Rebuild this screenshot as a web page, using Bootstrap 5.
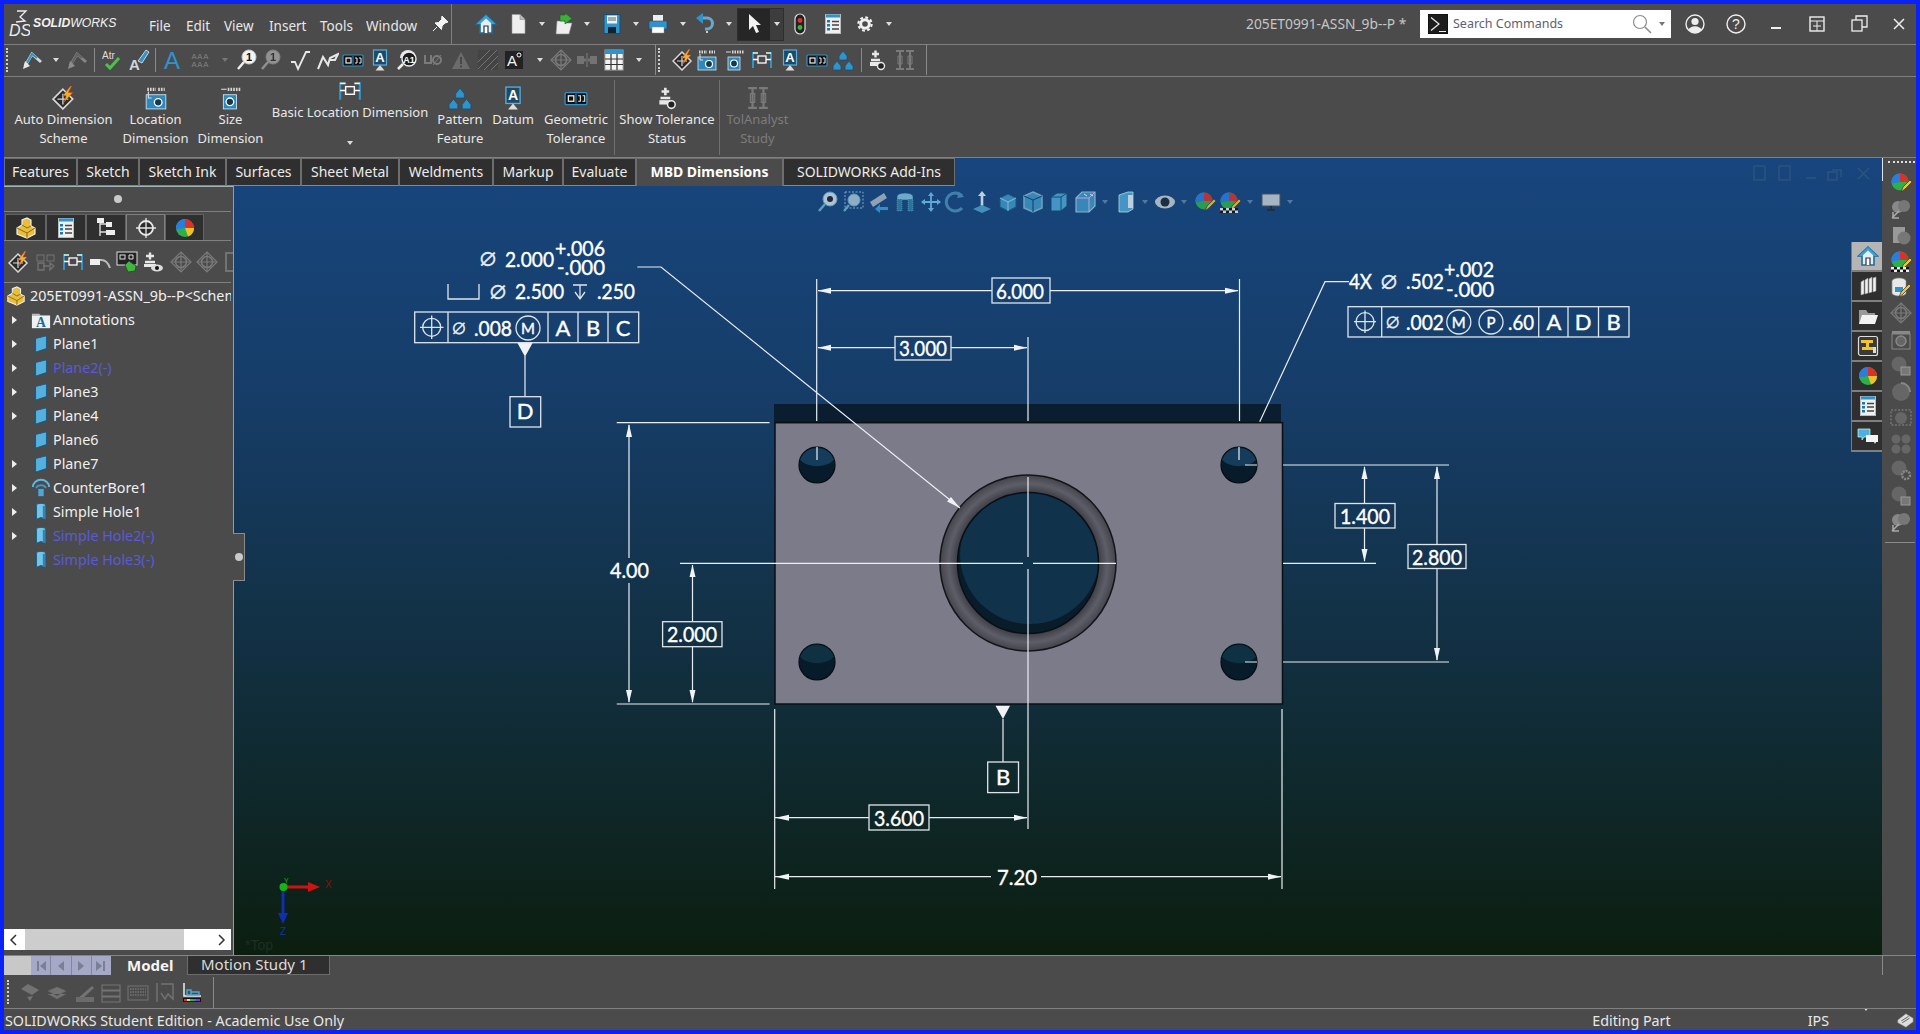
<!DOCTYPE html>
<html lang="en">
<head>
<meta charset="utf-8">
<title>SOLIDWORKS</title>
<link href="https://cdn.jsdelivr.net/npm/bootstrap@5.3.0/dist/css/bootstrap.min.css" rel="stylesheet">
<style>
html,body{height:100%;margin:0;overflow:hidden}
body{background:#0a22f5;font-family:"Noto Sans","Open Sans",sans-serif;color:#e8e8e8;font-size:13px}
.app{height:1034px;border:4px solid #0a22f5;background:#4b4b4b}
.ic{width:22px;height:22px;display:block;flex:none}
.dis{opacity:.42;filter:grayscale(1)}
.c{width:22px;height:22px;display:flex;align-items:center;justify-content:center}
.car::before{content:"";border:3.5px solid transparent;border-top:4px solid #dcdcdc;border-bottom:0}
.car.off::before{border-top-color:#777}
.vs{width:1px;height:24px;background:#8a8a8a;display:block}
.grip{width:2px;height:24px;border-left:2px dotted #d0d0d0;display:block}
/* menu row */
.row1{height:41px;border-bottom:1px solid #808080;flex:none}
.logo{width:145px;flex:none;padding-left:4px;gap:3px}
.ds{width:22px;height:30px}
.brand{font-family:"Liberation Sans",sans-serif;font-style:italic;font-size:12.2px;color:#f2f2f2;white-space:nowrap;margin-top:-1px}
.menu{display:grid;grid-template-columns:37px 38px 45px 51px 46px 67px;width:284px;flex:none;font-size:13.5px;margin-top:4px}
.pin-g{margin-left:-4px}
.tbsep{width:1px;height:40px;background:#808080;flex:none}
.qa{display:grid;grid-template-columns:32px 24px 23px 22px 25px 24px 22px 25px 22px 24px 24px 23px 24px 33px 32px 24px 22px;margin-left:23px;flex:none;align-items:center}
.selbtn{grid-column:span 2;display:flex;width:47px;height:33px;margin-left:-5px;border:1px solid #2e2e2e}
.selbtn b{width:32px;background:#262626;display:flex;align-items:center;justify-content:center}
.selbtn i{flex:1;background:#3d3d3d;display:flex;align-items:center;justify-content:center}
.title{color:#c6c6c6;font-size:13.8px;white-space:nowrap;width:160px;margin-right:14px}
.search{width:251px;height:28px;background:#fff;color:#5e6070;font-size:12.5px;gap:4px;padding-left:7px}
.search .mg{margin-left:auto;margin-right:-4px}
.search .car{width:18px}
.search .car::before{border-top-color:#777}
.ctl{display:grid;grid-template-columns:41px 40px 41px 42px 40px 22px;margin-left:13px;margin-right:6px}
/* toolbar 2 */
.row2{height:32px;border-bottom:1px solid #808080;flex:none;align-items:center;display:flex}
.tb2{display:grid;margin-left:-8px;margin-bottom:2px;align-items:center;grid-template-columns:26px 23px 22px 16px 18px 27px 16px 17px 28px 25px 22px 24px 28px 29px 25px 27px 28px 25px 28px 27px 26px 26px 21px 26px 27px 25px 16px 4px 24px 24px 28px 27px 28px 27px 26px 18px 16px 28px 21px 22px}
.full{height:31px;background:#8a8a8a}
/* ribbon */
.ribbon{height:81px;border-bottom:1px solid #808080;flex:none;display:grid;grid-template-columns:119px 65px 85px 154px 66px 40px 81px 1px 104px 1px 75px}
.rb{display:flex;flex-direction:column;align-items:center;padding-top:9px;line-height:19px;font-size:13px;text-align:center;white-space:nowrap}
.rb .ic{width:24px;height:24px}
.rb.up{padding-top:2px}
.rb.up .car{height:10px;margin-top:23px}
.rb.geo{padding-left:5px}
.rb.off{color:#7c7c7c}
.rsep{background:#6f6f6f;margin:3px 0 0;height:75px}
/* stage */
.stage{min-height:0;background:linear-gradient(#17457d 0%,#163d68 30%,#112d3a 68%,#0b1e0f 100%)}
.canvas{position:absolute;left:0;top:0;width:1878px;height:797px}
.txt{font-family:Lato,"Liberation Sans",sans-serif;fill:#fff;font-size:22px;stroke:#fff;stroke-width:.4}
.sm{font-family:"DejaVu Sans",sans-serif;font-size:28px;fill:#dfe6ec}
.ln{stroke:#e9eef2;stroke-width:1.2;fill:none}
.ar{fill:#f0f3f5}
.bx{fill:none;stroke:#dfe6ea;stroke-width:1.3}
.hud{opacity:.82}
.cmd{display:grid;grid-template-columns:73px 62px 87px 75px 98px 94px 70px 73px 147px 172px;position:relative;height:28px;width:950px;flex:none}
.cmd .nav-link{height:28px;padding:0;color:#ececec;font-size:14px;line-height:25px;text-align:center;background:#2f2f2f;border:1px solid #6e6e6e;border-bottom-color:#888;white-space:nowrap}
.cmd .nav-link.active{background:#4b4b4b;font-weight:700;color:#fff;border-bottom:0}
.under{min-height:0}
.fm{width:230px;background:#4b4b4b;border-right:1px solid #8aa0b0;border-top:1px solid #9fb2b2;position:relative;padding-right:2px}
.fm-top{height:25px;border-bottom:1px solid #7f7f7f}
.dot{width:8px;height:8px;border-radius:50%;background:#c9c9c9;display:block}
.fm-tabs{display:grid;grid-template-columns:41px 40px 40px 39px 39px;height:27px;margin-top:2px;border-bottom:1px solid #808080;padding-left:1px}
.fm-tabs span{background:#2f2f2f;height:26px;display:flex;align-items:center;justify-content:center;border:1px solid #636363;border-bottom:0}
.fm-tabs span.on{background:#4b4b4b;border-color:#808080}
.fm-icons{display:grid;grid-template-columns:27px 27px 27px 27px 26px 28px 26px 21px 22px;margin-left:4px;height:41px;align-items:center;width:225px;overflow:hidden}
.fm-rule{border-bottom:1px solid #808080;height:1px}
.tree .list-group-item{background:transparent;border:0;border-radius:0;padding:0 0 0 8px;height:24px;color:#f0f0f0;font-size:14.3px;display:flex;align-items:center;white-space:nowrap;line-height:24px}
.tree .arrow{width:6px;height:10px;flex:none;margin-right:13px}
.tree .arrow.r::before{content:"";display:block;border:4px solid transparent;border-left:5px solid #eee;border-right:0;margin-top:1px}
.tree .list-group-item .ic{width:20px;height:20px;margin-right:2px}
.tree .off{color:#5a5ad8!important}
.tree .root{padding-left:2px;overflow:hidden;margin-top:1px}
.tree .root .ic{margin-right:4px}
.hs{height:21px;background:#fff;margin-bottom:5px;flex:none;color:#222}
.hs b{width:159px;height:21px;background:#cdcdcd;margin:0 32px 0 6px}
.hs svg{width:10px;height:12px;margin-left:5px}
.hs svg.ms-0{margin-left:0}
.notch{position:absolute;left:229px;top:346px;width:12px;height:48px;background:#4b4b4b;border:1px solid #8a8a8a;border-left:0;display:flex;align-items:center;justify-content:flex-end;padding-right:1px}
.pane{width:34px;background:#4b4b4b;position:relative;flex:none}
.pane::before{content:"";position:absolute;left:0;top:0;width:1px;height:23px;background:#dfe6ea}
.pane .gr{height:12px;padding:3px 1px 0 6px}
.pane .gr i{display:block;border-top:2px dotted #ddd}
.pane .c{margin-left:8px;height:26.08px}
.pane hr{margin:7px 1px 0 3px;opacity:1;border-color:#8a8a8a}
.tasks{position:absolute;right:-1px;top:84px;width:32px}
.tasks span{display:flex;height:30px;align-items:center;justify-content:center;background:#2f2f2f;border:1px solid #7a7a7a;border-right:0;border-top:0;border-bottom:2px solid #7f7f7f}
.tasks span.on{background:#b5b5b5}
/* bottom */
.row3{height:21px;flex:none;border-top:1px solid #858585}
.nav-g{width:27px;background:#c8c8c8;height:19px}
.navb{width:80px;height:19px;display:grid;grid-template-columns:repeat(4,1fr);gap:1px;background:#84869c}
.navb span{background:#a5a8c6;display:flex;align-items:center;justify-content:center}
.navb svg{width:12px;height:12px}
.model{font-weight:700;color:#f5f5f5;font-size:15px;margin-left:16px;width:60px;line-height:18px}
.motion{width:143px;height:19px;background:#2f2f2f;border:1px solid #6c6c6c;border-top:0;padding-left:13px;font-size:15px;line-height:17px;color:#dcdcdc;white-space:nowrap}
.row3 .rl{margin-left:auto;width:34px;border-left:1px solid #8a8a8a;height:19px}
.row4{height:33px;flex:none;border-bottom:1px solid #808080;align-items:center}
.mot{display:grid;grid-template-columns:22px 27px 28px 26px 27px 27px 27px 21px 22px;margin-left:-7px;align-items:center}
.stat{height:21px;font-size:14.3px;line-height:24px;overflow:hidden;flex:none;white-space:nowrap;padding-left:1px}
.stat .e{margin-right:137px}
.stat .i{margin-right:34px}
.stat .u{margin-right:24px;width:8px}
.stat .ic{width:20px;height:20px;margin:1px 1px 0 0}
</style>
</head>
<body>
<svg class="d-none" xmlns="http://www.w3.org/2000/svg">
<symbol id="home" viewBox="0 0 22 22"><path d="M11 2 1.500 11H5v9h12v-9h3.500z" fill="#e6eef2" stroke="#1b6f9c" stroke-width="1.600"/><path d="M11 2 1.500 11 5 11 11 5.500 17 11h3.500z" fill="#3aa0d4"/><path d="M9 20v-7h4v7" fill="#fff" stroke="#234" stroke-width="1.200"/></symbol>
<symbol id="doc" viewBox="0 0 22 22"><path d="M5 1.500h8l5 5V20.500H5z" fill="#efefef" stroke="#999" stroke-width=".6"/><path d="M13 1.500v5h5" fill="#bbb" stroke="#888" stroke-width=".6"/></symbol>
<symbol id="open" viewBox="0 0 22 22"><path d="M3 8h7l2 2h6l-3 11H2z" fill="#eee" stroke="#888" stroke-width=".6"/><path d="M6 2h5V0l7 5.500L11 11V8H6z" fill="#3ab03c" stroke="#1b5a1b" stroke-width=".6"/></symbol>
<symbol id="save" viewBox="0 0 22 22"><rect x="3" y="1.500" width="16" height="19" fill="#2f93cc" stroke="#174e70"/><rect x="6" y="2.500" width="10" height="8" fill="#ecf2f5"/><path d="M7 5h8M7 7h8" stroke="#567"/><rect x="7" y="14" width="8" height="6" fill="#123"/></symbol>
<symbol id="print" viewBox="0 0 22 22"><rect x="6" y="2" width="10" height="7" fill="#eee"/><rect x="2" y="8" width="18" height="8" rx="1" fill="#2f93cc" stroke="#174e70" stroke-width=".6"/><rect x="5" y="14" width="12" height="6" fill="#fff" stroke="#888" stroke-width=".5"/></symbol>
<symbol id="undo" viewBox="0 0 22 22"><path d="M7 5h6a5.500 5.500 0 0 1 0 11H11" fill="none" stroke="#6ea6c8" stroke-width="3"/><path d="M9 0 2 5l7 6z" fill="#2f93cc"/><path d="M12 19h2" stroke="#ccc" stroke-width="2"/></symbol>
<symbol id="cur" viewBox="0 0 22 22"><path d="M6 1v16l4-4 3 7 3-1-3-7h5z" fill="#f2f2f2"/></symbol>
<symbol id="traf" viewBox="0 0 22 22"><rect x="6" y="1" width="10" height="20" rx="5" fill="#222" stroke="#ddd" stroke-width="1.200"/><circle cx="11" cy="7.500" r="2.400" fill="#d33"/><circle cx="11" cy="14.500" r="2.400" fill="#3b3"/></symbol>
<symbol id="list" viewBox="0 0 22 22"><rect x="3.500" y="1.500" width="15" height="19" fill="#f0f0f0" stroke="#bbb"/><path d="M4 1.500h14v3H4z" fill="#2f93cc"/><path d="M5 7h3v2.500H5zM5 11h3v2.500H5zM5 15h3v2.500H5z" fill="#1e78ad"/><path d="M10 8.500h7M10 12h7M10 16h7" stroke="#444" stroke-width="1.400"/></symbol>
<symbol id="gear" viewBox="0 0 22 22"><circle cx="11" cy="11" r="4.300" fill="none" stroke="#f0f0f0" stroke-width="3"/><circle cx="11" cy="11" r="6.600" fill="none" stroke="#f0f0f0" stroke-width="2.200" stroke-dasharray="2.800 2.400"/></symbol>
<symbol id="pin" viewBox="0 0 22 22"><path d="M13 3 19 9l-3 1-3 3-.5 3.500L6 10l3.500-.5 3-3zM8 14l-4 4" fill="#f4f4f4" stroke="#f4f4f4" stroke-width="1"/></symbol>
<symbol id="term" viewBox="0 0 22 22"><rect x="1.500" y="1.500" width="19" height="19" fill="#1d1d1d" stroke="#111"/><path d="m4 4.500 8 6.500-8 6.500M12 18.500h7" fill="none" stroke="#f0f0f0" stroke-width="1.200"/></symbol>
<symbol id="mag" viewBox="0 0 22 22"><circle cx="9" cy="9" r="6.500" fill="none" stroke="#8c8c8c" stroke-width="1.200"/><path d="m14 14 6 6" stroke="#8c8c8c" stroke-width="1.600"/></symbol>
<symbol id="user" viewBox="0 0 22 22"><circle cx="11" cy="11" r="9" fill="none" stroke="#eee" stroke-width="1.400"/><circle cx="11" cy="8.500" r="3.600" fill="#eee"/><path d="M4.500 17a7 6 0 0 1 13 0 9 9 0 0 1-13 0z" fill="#eee"/></symbol>
<symbol id="help" viewBox="0 0 22 22"><circle cx="11" cy="11" r="9" fill="none" stroke="#eee" stroke-width="1.400"/><text x="11" y="16" text-anchor="middle" font-family="Liberation Sans,sans-serif" font-size="14" fill="#eee">?</text></symbol>
<symbol id="min" viewBox="0 0 22 22"><path d="M6 15h10" stroke="#eee" stroke-width="2"/></symbol>
<symbol id="tile" viewBox="0 0 22 22"><rect x="4" y="4" width="14" height="14" fill="none" stroke="#eee" stroke-width="1.400"/><path d="M4 8h14M11 8v10" stroke="#eee" stroke-width="1"/><path d="M7 13h8" stroke="#eee"/></symbol>
<symbol id="rest" viewBox="0 0 22 22"><path d="M8 7V3h11v11h-5" fill="none" stroke="#eee" stroke-width="1.300"/><rect x="4" y="7" width="10" height="11" fill="none" stroke="#eee" stroke-width="1.300"/></symbol>
<symbol id="close" viewBox="0 0 22 22"><path d="m6 6 10 10M16 6 6 16" stroke="#eee" stroke-width="1.500"/></symbol>
<symbol id="smart" viewBox="0 0 22 22"><path d="M3 17 10 5l9 8" fill="none" stroke="#d6d6d6" stroke-width="3"/><path d="M5 14 10 5l5 4" fill="none" stroke="#2f93cc" stroke-width="2"/><path d="M1 20 3 12l5 5z" fill="#e8e8e8"/></symbol>
<symbol id="spell" viewBox="0 0 22 22"><text x="1" y="10" font-family="Liberation Sans,sans-serif" font-size="10" fill="#ddd">Atr</text><path d="m5 15 4 4 9-10" fill="none" stroke="#4cc24a" stroke-width="3"/></symbol>
<symbol id="brush" viewBox="0 0 22 22"><text x="1" y="21" font-family="Liberation Sans,sans-serif" font-size="15" font-weight="700" fill="#cfd6da">A</text><path d="m10 12 8-11 3 2-7 11z" fill="#2f93cc" stroke="#eee" stroke-width=".8"/></symbol>
<symbol id="bigA" viewBox="0 0 22 22"><text x="11" y="20" text-anchor="middle" font-family="Liberation Sans,sans-serif" font-size="24" fill="#2f93cc">A</text></symbol>
<symbol id="aaa" viewBox="0 0 22 22"><text x="11" y="10" text-anchor="middle" font-family="Liberation Sans,sans-serif" font-size="8" font-weight="700" fill="#aaa">AAA</text><text x="11" y="18" text-anchor="middle" font-family="Liberation Sans,sans-serif" font-size="8" font-weight="700" fill="#aaa">AAA</text></symbol>
<symbol id="find" viewBox="0 0 22 22"><circle cx="13" cy="8" r="7" fill="#f4f4f4" stroke="#ccc"/><text x="13" y="12" text-anchor="middle" font-family="Liberation Sans,sans-serif" font-size="11" font-weight="700" fill="#111">1</text><path d="m8 13-6 7" stroke="#eee" stroke-width="2.500"/></symbol>
<symbol id="sfin" viewBox="0 0 22 22"><path d="M3 13h4l3 7 8-17h4" fill="none" stroke="#e8e8e8" stroke-width="1.800"/></symbol>
<symbol id="weld" viewBox="0 0 22 22"><path d="M1 20 6 8l5 8 2-7 8-4-3 6-6 0" fill="none" stroke="#e8e8e8" stroke-width="2"/></symbol>
<symbol id="gtol" viewBox="0 0 22 22"><rect x="1" y="6" width="20" height="11" rx="1" fill="#111" stroke="#2f93cc" stroke-width="1.200"/><rect x="4" y="9" width="5" height="5" fill="none" stroke="#eee" stroke-width="1.200"/><path d="M11 7v9" stroke="#2f93cc"/><path d="M13 9h2v5h-2M17 9h2v5h-2" fill="none" stroke="#eee"/></symbol>
<symbol id="datum" viewBox="0 0 22 22"><rect x="4.500" y="1" width="13" height="15" fill="#1e4a68" stroke="#52b0e0" stroke-width="1.200"/><text x="11" y="13" text-anchor="middle" font-family="Liberation Sans,sans-serif" font-size="13" font-weight="700" fill="#fff">A</text><path d="m11 16-4.500 5.500h9z" fill="#ddd"/></symbol>
<symbol id="dfind" viewBox="0 0 22 22"><path d="M3 9a8 8 0 0 1 16 0z" fill="#e8e8e8"/><circle cx="12" cy="10" r="7" fill="#1c1c1c" stroke="#eee" stroke-width="1.400"/><text x="12" y="14" text-anchor="middle" font-family="Liberation Sans,sans-serif" font-size="9" font-weight="700" fill="#fff">A1</text><path d="m6 15-5 5" stroke="#eee" stroke-width="2.500"/></symbol>
<symbol id="ud" viewBox="0 0 22 22"><path d="M3 6v8h6V6" fill="none" stroke="#bbb" stroke-width="2"/><circle cx="15" cy="11" r="4" fill="none" stroke="#bbb" stroke-width="2"/><path d="m11 16 8-10" stroke="#bbb"/></symbol>
<symbol id="tri" viewBox="0 0 22 22"><path d="M11 3 20 20H2z" fill="#999"/><path d="M11 8v7M11 16.500v2" stroke="#444" stroke-width="2"/></symbol>
<symbol id="hatch" viewBox="0 0 22 22"><rect x="1" y="1" width="20" height="20" fill="#3c3c3c"/><path d="M1 13 13 1M1 20 20 1M7 21 21 7M14 21l7-7" stroke="#aaa"/></symbol>
<symbol id="note" viewBox="0 0 22 22"><rect x="2" y="2" width="18" height="18" fill="#222"/><text x="9" y="17" text-anchor="middle" font-family="Liberation Sans,sans-serif" font-size="15" fill="#f4f4f4">A</text><circle cx="16" cy="6" r="2" fill="none" stroke="#f4f4f4"/></symbol>
<symbol id="tgt" viewBox="0 0 22 22"><path d="M11 1 21 11 11 21 1 11z" fill="none" stroke="#bbb" stroke-width="1.200"/><circle cx="11" cy="11" r="5.500" fill="none" stroke="#bbb" stroke-width="1.600"/><path d="M11 2v18M2 11h18" stroke="#bbb" stroke-width="1.200"/></symbol>
<symbol id="cl" viewBox="0 0 22 22"><path d="M1 7h7v8H1zM14 7h7v8h-7z" fill="#aaa"/><path d="M8 11h6" stroke="#aaa" stroke-width="3"/><path d="M11 4v14" stroke="#888" stroke-width="2"/></symbol>
<symbol id="table" viewBox="0 0 22 22"><rect x="2" y="1" width="18" height="20" fill="#f2f2f2" stroke="#aaa"/><path d="M2 1h18v4H2z" fill="#2f93cc"/><path d="M2 10h18M2 15.500h18M8 5v16M14 5v16" stroke="#333" stroke-width="1.200"/></symbol>
<symbol id="auto" viewBox="0 0 22 22"><path d="M10 3 19 12 10 21 1 12z" fill="#2b2b2b" stroke="#d8d8d8" stroke-width="1.500"/><path d="M5 12h10M10 7v10" stroke="#d8d8d8" stroke-width="1.200"/><path d="M17 0 10 9h3l-2 6 8-9h-4l3-6z" fill="#f2b120" stroke="#c5412a" stroke-width=".5"/></symbol>
<symbol id="loc" viewBox="0 0 22 22"><path d="M3 3h8M13 3h6" stroke="#d8d8d8" stroke-width="3" stroke-dasharray="1.500 1"/><rect x="2" y="8" width="18" height="13" fill="#2f88bd" stroke="#cfe5f0" stroke-width=".8"/><circle cx="13" cy="15" r="3.500" fill="#103a55" stroke="#fff" stroke-width="1.200"/><path d="M4 5v6h3" fill="none" stroke="#ddd"/></symbol>
<symbol id="size" viewBox="0 0 22 22"><path d="M8 3h12" stroke="#d8d8d8" stroke-width="3" stroke-dasharray="1.500 1"/><path d="M2 3h5" stroke="#d8d8d8"/><rect x="4" y="8" width="12" height="13" fill="#2f88bd" stroke="#cfe5f0" stroke-width=".8"/><circle cx="10" cy="14.500" r="3.500" fill="#103a55" stroke="#fff" stroke-width="1.200"/></symbol>
<symbol id="basic" viewBox="0 0 22 22"><path d="M2 3v16M20 3v16" stroke="#2f93cc" stroke-width="2"/><path d="M2 4h5M15 4h5" stroke="#dfe" stroke-width="1.400"/><rect x="7" y="7" width="8" height="7" fill="none" stroke="#fff" stroke-width="1.300"/><path d="M2 10.500h5M15 10.500h5" stroke="#fff" stroke-width="1.500"/></symbol>
<symbol id="patt" viewBox="0 0 22 22"><path d="M11 2l4 5v4H7V7zM5 12l4 5v4H1v-4zM17 12l4 5v4h-8v-4z" fill="#2f93cc" stroke="#164f73" stroke-width=".7"/></symbol>
<symbol id="stol" viewBox="0 0 22 22"><path d="M6 5h7M9.500 1.500v7M5 11h9" stroke="#e8e8e8" stroke-width="2.400"/><rect x="4" y="13" width="10" height="4" fill="#e8e8e8"/><circle cx="15" cy="17" r="3.500" fill="#222" stroke="#e8e8e8" stroke-width="1.400"/></symbol>
<symbol id="tola" viewBox="0 0 22 22"><path d="M2 2h8M2 20h8M6 2v18M12 2h8M12 20h8M16 2v18" stroke="#bbb" stroke-width="2"/><path d="M4 7h4v8H4zM14 7h4v8h-4z" fill="none" stroke="#bbb"/></symbol>
<symbol id="part" viewBox="0 0 22 22"><path d="M2 11 7 8V3l5-2 4 2v6l4 2v6l-8 4-10-4z" fill="#e9be3a" stroke="#eee" stroke-width="1.200"/><path d="M2 11l10 5 8-5M12 16v5M7 8l5 3 4-2" fill="none" stroke="#8a6a12" stroke-width="1"/></symbol>
<symbol id="conf" viewBox="0 0 22 22"><path d="M5 3v16M5 7h8M5 15h8" fill="none" stroke="#ddd" stroke-width="1.400"/><rect x="2" y="1" width="7" height="5" fill="#eee"/><rect x="11" y="5" width="6" height="5" fill="#eee"/><rect x="11" y="13" width="9" height="5" fill="#eee"/></symbol>
<symbol id="cross" viewBox="0 0 22 22"><circle cx="11" cy="11" r="7" fill="#2c2c2c" stroke="#e8e8e8" stroke-width="1.800"/><path d="M11 1v20M1 11h20" stroke="#e8e8e8" stroke-width="1.300"/></symbol>
<symbol id="ball" viewBox="0 0 22 22"><circle cx="11" cy="11" r="9" fill="#2db04a"/><path d="M11 11V2A9 9 0 0 0 2.100 12.500z" fill="#2a7de0"/><path d="M11 11V2A9 9 0 0 1 20 11z" fill="#d8322a"/><path d="M11 11h9a9 9 0 0 1-6 8.500z" fill="#eec22a"/></symbol>
<symbol id="ball2" viewBox="0 0 22 22"><circle cx="10" cy="10" r="8.500" fill="#2db04a"/><path d="M10 10V1.500A8.500 8.500 0 0 0 1.600 11.500z" fill="#2a7de0"/><path d="M10 10V1.500A8.500 8.500 0 0 1 18.500 10z" fill="#d8322a"/><path d="m11 20 2-5 7-7 2 2-7 7z" fill="#f2c230" stroke="#333" stroke-width=".7"/></symbol>
<symbol id="scene" viewBox="0 0 22 22"><use href="#ball2" width="22" height="22"/><path d="M1 17h18v5H1z" fill="#111"/><path d="M1 17h3v2.500H1zM7 17h3v2.500H7zM13 17h3v2.500h-3zM4 19.500h3V22H4zM10 19.500h3V22h-3zM16 19.500h3V22h-3z" fill="#eee"/></symbol>
<symbol id="dbp" viewBox="0 0 22 22"><path d="M2 5a7 3 0 0 1 14 0v12a7 3 0 0 1-14 0z" fill="#e8e8e8" stroke="#888" stroke-width=".6"/><path d="M5 11h8v5H5z" fill="#2f93cc"/><path d="m9 21 2-5 8-8 2 2-8 8z" fill="#f2c230" stroke="#333" stroke-width=".7"/></symbol>
<symbol id="plane" viewBox="0 0 22 22"><path d="M5 5 17 2v14L5 20z" fill="#55b0dd" stroke="#165a82" stroke-width="1"/><path d="M5 5 4 6v15l1-1z" fill="#165a82"/></symbol>
<symbol id="cbore" viewBox="0 0 22 22"><path d="M2 10a9 8 0 0 1 18 0" fill="none" stroke="#5bb8e2" stroke-width="2.200"/><path d="M5.500 11a6 5 0 0 1 11 0" fill="none" stroke="#3a97c6" stroke-width="2"/><path d="M8 12h6v8H8z" fill="#4aa7d6"/></symbol>
<symbol id="hole" viewBox="0 0 22 22"><path d="M6 4a5 2.500 0 0 1 10 0v15l-5-2-5 2z" fill="#74c4ea" stroke="#165a82" stroke-width="1"/><path d="M13 4h3v15l-3-1.200z" fill="#3184b3"/></symbol>
<symbol id="afold" viewBox="0 0 22 22"><path d="M1 4h8l2 2H1z" fill="#bbb"/><rect x="1" y="6" width="20" height="14" fill="#eef2f4"/><text x="11" y="19" text-anchor="middle" font-family="Liberation Serif,serif" font-size="15" font-weight="700" fill="#1e6a9a">A</text></symbol>
<symbol id="books" viewBox="0 0 22 22"><path d="M4 7l3-2v14l-3 1zM8 5l3-2v15l-3 1zM12 4l3-2v15l-3 1zM16 3l3-1v14l-3 1z" fill="#f0f0f0" stroke="#999" stroke-width=".6"/></symbol>
<symbol id="folder" viewBox="0 0 22 22"><path d="M2 5h7l2 3h7v11H2z" fill="#999"/><path d="M5 10h16l-3 9H2z" fill="#f2f2f2"/></symbol>
<symbol id="yel" viewBox="0 0 22 22"><rect x="1.500" y="1.500" width="19" height="19" rx="2" fill="#3a3a3a" stroke="#ddd" stroke-width="1.200"/><path d="M4 5h12v3H4zM9 8h3v4h5v3H5v-3h4z" fill="#f0c431"/><rect x="16" y="12" width="3" height="6" fill="#ddd"/></symbol>
<symbol id="chat" viewBox="0 0 22 22"><path d="M1 4h12v8H7l-2 3v-3H1z" fill="#4fb0e0" stroke="#cfe" stroke-width=".7"/><path d="M9 10h12v7h-2l-1 2-1-2H9z" fill="#f4f4f4"/></symbol>
<symbol id="vzoom" viewBox="0 0 22 22"><circle cx="13" cy="8" r="7" fill="#d4dee6" stroke="#6fb0d0"/><circle cx="13" cy="8" r="3" fill="#223"/><path d="m8 13-6 7" stroke="#6fb0d0" stroke-width="2.400"/></symbol>
<symbol id="varea" viewBox="0 0 22 22"><rect x="3" y="1" width="18" height="16" fill="none" stroke="#8fbfd8" stroke-dasharray="2 1.500"/><circle cx="12" cy="9" r="6" fill="#aac4d6" stroke="#6fb0d0"/><path d="m7 14-5 6" stroke="#6fb0d0" stroke-width="2.400"/></symbol>
<symbol id="vprev" viewBox="0 0 22 22"><path d="m3 11 14-9 3 5-14 9z" fill="#aab6c0"/><path d="M21 16h-8v-3l-5 5 5 4v-3h8z" fill="#3a9fd4"/></symbol>
<symbol id="vsec" viewBox="0 0 22 22"><path d="M3 5a8 3 0 0 1 16 0v15h-5V9H8v11H3z" fill="#7fc0e0" stroke="#164f73" stroke-width=".6"/><path d="M3 8h5v12H3zM14 8h5v12h-5z" fill="#2f7ea8" stroke="#cfe" stroke-width=".3" stroke-dasharray="1 1"/></symbol>
<symbol id="vpan" viewBox="0 0 22 22"><path d="M11 2v18M2 11h18" stroke="#6fc0e8" stroke-width="1.800"/><path d="m11 1 3 4H8zM11 21l3-4H8zM1 11l4-3v6zM21 11l-4-3v6z" fill="#6fc0e8"/></symbol>
<symbol id="vrot" viewBox="0 0 22 22"><path d="M18 5A9 9 0 1 0 18 17" fill="none" stroke="#4a8fb8" stroke-width="3"/><path d="m15 1 5 5-7 1z" fill="#4a8fb8"/></symbol>
<symbol id="vup" viewBox="0 0 22 22"><path d="M11 2v13" stroke="#e0eef4" stroke-width="2.600"/><path d="m11 0 4 5H7z" fill="#e0eef4"/><path d="M2 18l9-4 9 4-9 4z" fill="#4f9fca"/></symbol>
<symbol id="c1" viewBox="0 0 22 22"><path d="M11 3 19 7v9l-8 4-8-4V7z" fill="#3f97c6" stroke="#1a5a80"/><path d="M3 7l8 4 8-4M11 11v9" fill="none" stroke="#9cd4ee"/></symbol>
<symbol id="c2" viewBox="0 0 22 22"><path d="M11 1 20 5v12l-9 4-9-4V5z" fill="#3f97c6" stroke="#88b6d0" stroke-width="1.500"/><path d="M2 5l9 4 9-4M11 9v12" fill="none" stroke="#0d3f5c"/></symbol>
<symbol id="c3" viewBox="0 0 22 22"><path d="M3 6 9 2h10v13l-6 5H3z" fill="#4fa7d6" stroke="#144a6c"/><path d="M3 6h10v14M13 6l6-4" fill="none" stroke="#144a6c"/></symbol>
<symbol id="c4" viewBox="0 0 22 22"><path d="M2 7 8 1h13v14l-6 6H2z" fill="#3f97c6" stroke="#a0c8dc" stroke-width="1.200"/><path d="M2 7h13v14M15 7l6-6" fill="none" stroke="#dbe" /><path d="M10 3l3 2M16 3l3 2" stroke="#fff"/></symbol>
<symbol id="box" viewBox="0 0 22 22"><path d="M4 4 13 1h5v17l-5 3H4z" fill="#4fa7d6" stroke="#cfe" stroke-width=".8"/><path d="M13 4h5v13h-5z" fill="#dfeef6"/></symbol>
<symbol id="eye" viewBox="0 0 22 22"><ellipse cx="11" cy="11" rx="10" ry="6.500" fill="#c6ced4"/><circle cx="11" cy="11" r="4.500" fill="#1c2a36"/></symbol>
<symbol id="mon" viewBox="0 0 22 22"><rect x="2" y="3" width="18" height="12" fill="#c6ced4" stroke="#555"/><path d="M11 15v3M7 19h8" stroke="#2a2a2a" stroke-width="2"/></symbol>
<symbol id="m1" viewBox="0 0 22 22"><path d="M2 8 9 3l11 6-7 5zM8 16l3 4 3-5" fill="#aaa"/></symbol>
<symbol id="m2" viewBox="0 0 22 22"><path d="M2 10 11 6l9 4-9 5zM2 13l9 5 9-5" fill="#aaa" stroke="#888" stroke-width=".6"/></symbol>
<symbol id="m3" viewBox="0 0 22 22"><path d="M2 19 18 5l2 2L7 19z" fill="#aaa"/><rect x="2" y="16" width="18" height="5" fill="#999"/></symbol>
<symbol id="m4" viewBox="0 0 22 22"><path d="M2 4h18v5H2zM2 10h18v5H2zM2 16h18v5H2z" fill="none" stroke="#aaa" stroke-width="1.200"/></symbol>
<symbol id="m5" viewBox="0 0 22 22"><rect x="1" y="5" width="20" height="14" fill="none" stroke="#aaa"/><path d="M3 8h16M3 11h16M3 14h16" stroke="#aaa" stroke-width="1.500" stroke-dasharray="1.500 1"/></symbol>
<symbol id="m6" viewBox="0 0 22 22"><path d="M3 2v19M7 3h12v15l-5-5-3 5-4-6" fill="none" stroke="#aaa" stroke-width="1.400"/></symbol>
<symbol id="m7" viewBox="0 0 22 22"><path d="M3 2v13h17" fill="none" stroke="#eee" stroke-width="1.500"/><path d="M6 9h4v5H6zM10 11h8v3h-8z" fill="none" stroke="#4fa7d6" stroke-width="1.400"/><path d="M2 17h18v4H2z" fill="#111"/><path d="M3 18h3v2H3z" fill="#d33"/><path d="M6 18h3v2H6z" fill="#ed8"/><path d="M9 18h3v2H9z" fill="#3b3"/><path d="M12 18h3v2h-3z" fill="#38d"/><path d="M15 18h4v2h-4z" fill="#83d"/></symbol>
<symbol id="disc" viewBox="0 0 22 22"><path d="M3 11 12 4l8 5v4l-8 6-9-5z" fill="#ddd" stroke="#777" stroke-width=".6"/><path d="M7 12 15 7M8 14l8-5" stroke="#555"/></symbol>
<symbol id="arrowr" viewBox="0 0 10 12"><path d="m3 1 5 5-5 5" fill="none" stroke="#333" stroke-width="1.500"/></symbol>
<symbol id="arrowl" viewBox="0 0 10 12"><path d="M7 1 2 6l5 5" fill="none" stroke="#333" stroke-width="1.500"/></symbol>
<symbol id="first" viewBox="0 0 12 12"><path d="M2 1h2v10H2zM11 1v10L5 6z" fill="#7c7e94"/></symbol>
<symbol id="prev" viewBox="0 0 12 12"><path d="M9 1v10L3 6z" fill="#7c7e94"/></symbol>
<symbol id="next" viewBox="0 0 12 12"><path d="M3 1v10l6-5z" fill="#7c7e94"/></symbol>
<symbol id="last" viewBox="0 0 12 12"><path d="M10 1H8v10h2zM1 1v10l6-5z" fill="#7c7e94"/></symbol>
<symbol id="dim1" viewBox="0 0 22 22"><rect x="2" y="4" width="7" height="6" fill="none" stroke="#aaa"/><rect x="12" y="4" width="7" height="6" fill="none" stroke="#aaa"/><path d="M3 12h6v7H3zM15 12l4 3-4 4zM8 15h6" fill="none" stroke="#aaa" stroke-width="1.300"/></symbol>
<symbol id="capt" viewBox="0 0 22 22"><rect x="1" y="8" width="10" height="6" fill="#eee"/><path d="M11 9q7-1 10 8" fill="none" stroke="#bbb" stroke-width="2"/></symbol>
<symbol id="gchk" viewBox="0 0 22 22"><rect x="1" y="1" width="20" height="13" fill="#222" stroke="#ddd"/><rect x="4" y="4" width="5" height="4" fill="none" stroke="#ddd"/><path d="M13 4h4v4h-4z" fill="none" stroke="#ddd"/><path d="m9 14 3 7 7-1 1-5-7-5z" fill="#3fb83f" stroke="#164a16" stroke-width=".7"/></symbol>
<symbol id="seye" viewBox="0 0 22 22"><path d="M4 5h8M8 1.500v7M3 11h10" stroke="#e8e8e8" stroke-width="2.400"/><rect x="2" y="13" width="12" height="3" fill="#e8e8e8"/><ellipse cx="15" cy="17" rx="6" ry="3.500" fill="#ddd"/><circle cx="15" cy="17" r="2" fill="#111"/></symbol>
<symbol id="brk" viewBox="0 0 22 22"><path d="M16 2H9v18h7" fill="none" stroke="#aaa" stroke-width="2"/></symbol>
<symbol id="bloom1" viewBox="0 0 22 22"><circle cx="8" cy="9" r="6" fill="#888"/><circle cx="14" cy="8" r="6" fill="#777"/><path d="M2 20 9 13M3 14v6h6" fill="none" stroke="#aaa" stroke-width="1.500"/></symbol>
<symbol id="clip" viewBox="0 0 22 22"><rect x="3" y="3" width="12" height="16" fill="#999"/><circle cx="14" cy="14" r="6.500" fill="#777"/></symbol>
<symbol id="cam" viewBox="0 0 22 22"><rect x="2" y="2" width="18" height="3" fill="#888"/><rect x="2" y="5" width="18" height="15" fill="none" stroke="#888"/><circle cx="11" cy="12" r="5" fill="#666" stroke="#888" stroke-width="1.500"/></symbol>
<symbol id="sph" viewBox="0 0 22 22"><circle cx="11" cy="11" r="9" fill="#666"/><path d="M11 2a9 9 0 0 1 9 9" fill="none" stroke="#888" stroke-width="2"/></symbol>
<symbol id="sphcam" viewBox="0 0 22 22"><circle cx="9" cy="9" r="7.500" fill="#666"/><rect x="11" y="12" width="9" height="8" fill="#777" stroke="#999"/></symbol>
<symbol id="four" viewBox="0 0 22 22"><circle cx="6" cy="6" r="4.500" fill="#666"/><circle cx="16" cy="6" r="4.500" fill="#666"/><circle cx="6" cy="16" r="4.500" fill="#666"/><circle cx="16" cy="16" r="4.500" fill="#666"/></symbol>
<symbol id="sphg" viewBox="0 0 22 22"><circle cx="9" cy="9" r="7.500" fill="#666"/><circle cx="16" cy="16" r="4" fill="none" stroke="#888" stroke-width="2.500" stroke-dasharray="2 1"/></symbol>
<symbol id="film" viewBox="0 0 22 22"><rect x="1" y="3" width="20" height="15" fill="none" stroke="#888" stroke-dasharray="2 1.500"/><circle cx="11" cy="11" r="6" fill="#666"/></symbol>
</svg>

<div class="app d-flex flex-column">
  <header class="row1 d-flex align-items-center">
    <div class="logo d-flex align-items-center">
      <svg class="ds" viewBox="0 0 22 30"><path d="M9 2h9l-6 6 5 4-9 1" fill="none" stroke="#eee" stroke-width="1.300"/><text x="1" y="27" font-family="Liberation Sans,sans-serif" font-style="italic" font-size="16" fill="#eee">DS</text></svg>
      <span class="brand"><b>SOLID</b>WORKS</span>
    </div>
    <nav class="menu"><span>File</span><span>Edit</span><span>View</span><span>Insert</span><span>Tools</span><span>Window</span></nav>
    <svg class="ic pin-g"><use href="#pin"/></svg>
    <i class="tbsep"></i>
    <div class="qa">
      <span class="c"><svg class="ic"><use href="#home"/></svg></span>
      <span class="c"><svg class="ic"><use href="#doc"/></svg></span><i class="c car"></i>
      <span class="c"><svg class="ic"><use href="#open"/></svg></span><i class="c car"></i>
      <span class="c"><svg class="ic"><use href="#save"/></svg></span><i class="c car"></i>
      <span class="c"><svg class="ic"><use href="#print"/></svg></span><i class="c car"></i>
      <span class="c"><svg class="ic"><use href="#undo"/></svg></span><i class="c car"></i>
      <span class="selbtn"><b><svg class="ic"><use href="#cur"/></svg></b><i class="car"></i></span>
      <span class="c"><svg class="ic"><use href="#traf"/></svg></span>
      <span class="c"><svg class="ic"><use href="#list"/></svg></span>
      <span class="c"><svg class="ic"><use href="#gear"/></svg></span><i class="c car"></i>
    </div>
    <div class="ms-auto d-flex align-items-center">
      <span class="title">205ET0991-ASSN_9b--P *</span>
      <div class="search d-flex align-items-center"><svg class="ic"><use href="#term"/></svg><span>Search Commands</span><svg class="ic mg"><use href="#mag"/></svg><i class="car d-flex justify-content-center"></i></div>
      <div class="ctl">
        <span class="c"><svg class="ic"><use href="#user"/></svg></span><span class="c"><svg class="ic"><use href="#help"/></svg></span><span class="c"><svg class="ic"><use href="#min"/></svg></span><span class="c"><svg class="ic"><use href="#tile"/></svg></span><span class="c"><svg class="ic"><use href="#rest"/></svg></span><span class="c"><svg class="ic"><use href="#close"/></svg></span>
      </div>
    </div>
  </header>

  <div class="row2">
    <div class="tb2">
      <span class="c"><i class="grip"></i></span>
      <span class="c"><svg class="ic"><use href="#smart"/></svg></span><i class="c car"></i>
      <span class="c"><svg class="ic dis"><use href="#smart"/></svg></span>
      <span class="c"><i class="vs"></i></span>
      <span class="c"><svg class="ic"><use href="#spell"/></svg></span>
      <span class="c"><svg class="ic"><use href="#brush"/></svg></span>
      <span class="c"><i class="vs"></i></span>
      <span class="c"><svg class="ic"><use href="#bigA"/></svg></span>
      <span class="c"><svg class="ic dis"><use href="#aaa"/></svg></span><i class="c car off"></i>
      <span class="c"><svg class="ic"><use href="#find"/></svg></span>
      <span class="c"><svg class="ic dis"><use href="#find"/></svg></span>
      <span class="c"><svg class="ic"><use href="#sfin"/></svg></span>
      <span class="c"><svg class="ic"><use href="#weld"/></svg></span>
      <span class="c"><svg class="ic"><use href="#gtol"/></svg></span>
      <span class="c"><svg class="ic"><use href="#datum"/></svg></span>
      <span class="c"><svg class="ic"><use href="#dfind"/></svg></span>
      <span class="c"><svg class="ic dis"><use href="#ud"/></svg></span>
      <span class="c"><svg class="ic dis"><use href="#tri"/></svg></span>
      <span class="c"><svg class="ic dis"><use href="#hatch"/></svg></span>
      <span class="c"><svg class="ic"><use href="#note"/></svg></span><i class="c car"></i>
      <span class="c"><svg class="ic dis"><use href="#tgt"/></svg></span>
      <span class="c"><svg class="ic dis"><use href="#cl"/></svg></span>
      <span class="c"><svg class="ic"><use href="#table"/></svg></span><i class="c car"></i>
      <span class="c"><i class="vs full"></i></span>
      <span class="c"><i class="grip"></i></span>
      <span class="c"><svg class="ic"><use href="#auto"/></svg></span>
      <span class="c"><svg class="ic"><use href="#loc"/></svg></span>
      <span class="c"><svg class="ic"><use href="#size"/></svg></span>
      <span class="c"><svg class="ic"><use href="#basic"/></svg></span>
      <span class="c"><svg class="ic"><use href="#datum"/></svg></span>
      <span class="c"><svg class="ic"><use href="#gtol"/></svg></span>
      <span class="c"><svg class="ic"><use href="#patt"/></svg></span>
      <span class="c"><i class="vs"></i></span>
      <span class="c"><svg class="ic"><use href="#stol"/></svg></span>
      <span class="c"><svg class="ic dis"><use href="#tola"/></svg></span>
      <span class="c"><i class="vs full"></i></span>
    </div>
  </div>

  <div class="ribbon">
    <div class="rb"><svg class="ic"><use href="#auto"/></svg><span>Auto Dimension<br>Scheme</span></div>
    <div class="rb"><svg class="ic"><use href="#loc"/></svg><span>Location<br>Dimension</span></div>
    <div class="rb"><svg class="ic"><use href="#size"/></svg><span>Size<br>Dimension</span></div>
    <div class="rb up"><svg class="ic"><use href="#basic"/></svg><span>Basic Location Dimension</span><i class="car"></i></div>
    <div class="rb"><svg class="ic"><use href="#patt"/></svg><span>Pattern<br>Feature</span></div>
    <div class="rb"><svg class="ic"><use href="#datum"/></svg><span>Datum</span></div>
    <div class="rb geo"><svg class="ic"><use href="#gtol"/></svg><span>Geometric<br>Tolerance</span></div>
    <i class="rsep"></i>
    <div class="rb"><svg class="ic"><use href="#stol"/></svg><span>Show Tolerance<br>Status</span></div>
    <i class="rsep"></i>
    <div class="rb off"><svg class="ic dis"><use href="#tola"/></svg><span>TolAnalyst<br>Study</span></div>
  </div>

  <main class="d-flex flex-grow-1 under">
    <section class="stage flex-grow-1 d-flex flex-column position-relative">
      <svg class="canvas" viewBox="4 158 1878 797" xmlns="http://www.w3.org/2000/svg">
        <defs>
          <radialGradient id="ring" gradientUnits="userSpaceOnUse" cx="1028" cy="563" r="88"><stop offset=".8" stop-color="#3d3d45"/><stop offset=".9" stop-color="#5e5e69"/><stop offset="1" stop-color="#44444d"/></radialGradient>
          <clipPath id="bore"><circle cx="1028" cy="563" r="70.500"/></clipPath>
          <g id="h"><circle r="18" fill="#071b2a" stroke="#040d14" stroke-width="1.200"/><path d="M-17-5A18 18 0 0 1 17-5 21 15 0 0 1-17-5z" fill="currentColor"/></g>
        </defs>
        <g class="hud">
          <use href="#vzoom" x="817" y="191" width="22" height="22"/><use href="#varea" x="842" y="191" width="22" height="22"/><use href="#vprev" x="867" y="191" width="22" height="22"/><use href="#vsec" x="894" y="191" width="22" height="22"/><use href="#vpan" x="920" y="191" width="22" height="22"/><use href="#vrot" x="944" y="191" width="22" height="22"/><use href="#vup" x="971" y="191" width="22" height="22"/><use href="#c1" x="997" y="191" width="22" height="22"/><use href="#c2" x="1022" y="191" width="22" height="22"/><use href="#c3" x="1048" y="191" width="22" height="22"/><use href="#c4" x="1074" y="191" width="22" height="22"/>
          <path d="m1102 200h6l-3 4zM1142 200h6l-3 4zM1181 200h6l-3 4zM1247 200h6l-3 4zM1287 200h6l-3 4z" fill="#5f86a8"/>
          <use href="#box" x="1115" y="191" width="22" height="22"/><use href="#eye" x="1154" y="191" width="22" height="22"/><use href="#ball2" x="1194" y="191" width="22" height="22"/><use href="#scene" x="1219" y="191" width="22" height="22"/><use href="#mon" x="1260" y="191" width="22" height="22"/>
        </g>
        <g fill="none" stroke="#2a5380" stroke-width="1.500">
          <rect x="1754" y="166" width="11" height="14"/><rect x="1779" y="166" width="11" height="14"/><path d="M1806 178h10M1833 170h8v7M1833 170h-1M1828 172h9v8h-9zM1858 168l11 11M1869 168l-11 11"/>
        </g>
        <rect x="774" y="404" width="507" height="19" fill="#0a1e30"/>
        <rect x="775" y="422.700" width="507.500" height="281.300" fill="#7b7b8a" stroke="#0a0f16" stroke-width="1.500"/>
        <use href="#h" x="817" y="465" color="#153c5b"/><use href="#h" x="1239" y="465" color="#153c5b"/>
        <use href="#h" x="817" y="662" color="#0f3243"/><use href="#h" x="1239" y="662" color="#0f3243"/>
        <circle cx="1028" cy="563" r="88" fill="url(#ring)" stroke="#14141a" stroke-width="1.500"/>
        <circle cx="1028" cy="563" r="70.500" fill="#091c2a"/>
        <g clip-path="url(#bore)"><circle cx="1030" cy="554" r="70" fill="#11324b"/></g>
        <circle cx="1028" cy="563" r="70.500" fill="none" stroke="#0a0f16" stroke-width="1.500"/>
        <path class="ln" d="M616.700 422.700H769.600M616.700 704H769.600M629 425V558M629 583V702M680 563.300H1023M1033 563.300H1116M692.500 565V621.700M692.500 646.700V702M1028 337V421M1028 477V557M1028 569V829M816.700 279V421M1239.500 279V421M817 447V460M1239 447V460M1245 465H1257M1245 662H1257M1283 465H1449M1283 563.300H1376M1283 662H1449M1364.500 467V503M1364.500 528V561M1437 467V545M1437 568V660M818 290.700H992M1050 290.700H1238M818 347.700H895M951 347.700H1027M775 817.700H869M929 817.700H1027M775 876.700H991M1041 876.700H1281M774.700 709V889M1282 709V889M637.300 267H661L960 508M525 356V396.700M1003 719V762M1259.700 421.700 1325 281.700H1349"/>
        <g class="ar">
          <polygon points="629,424 626,437 632,437"/><polygon points="629,703 626,690 632,690"/>
          <polygon points="692.500,564.500 689.500,577 695.500,577"/><polygon points="692.500,703 689.500,690 695.500,690"/>
          <polygon points="1364.500,466 1361.500,479 1367.500,479"/><polygon points="1364.500,562 1361.500,549 1367.500,549"/>
          <polygon points="1437,466 1434,479 1440,479"/><polygon points="1437,661 1434,648 1440,648"/>
          <polygon points="817.500,290.700 831,287.700 831,293.700"/><polygon points="1238.500,290.700 1225,287.700 1225,293.700"/>
          <polygon points="817.500,347.700 831,344.700 831,350.700"/><polygon points="1027.500,347.700 1014,344.700 1014,350.700"/>
          <polygon points="775.500,817.700 789,814.700 789,820.700"/><polygon points="1027.500,817.700 1014,814.700 1014,820.700"/>
          <polygon points="775.500,876.700 789,873.700 789,879.700"/><polygon points="1281.500,876.700 1268,873.700 1268,879.700"/>
          <polygon points="960,508 947.100,501.500 950.900,496.900"/>
          <polygon points="517.300,342.700 532.700,342.700 525,356.700"/><polygon points="995.500,705.700 1010,705.700 1003,719"/>
        </g>
        <g class="bx">
          <rect x="992" y="278" width="58" height="25"/><rect x="895" y="336.500" width="56" height="23.500"/><rect x="662.600" y="621.700" width="59.400" height="25"/><rect x="1335" y="503.500" width="60" height="24.500"/><rect x="1408" y="544.500" width="58" height="24"/><rect x="869" y="805" width="60" height="25"/>
          <rect x="510" y="396.700" width="30.700" height="30.300"/><rect x="987.700" y="762" width="30.800" height="30.600"/>
          <rect x="414.700" y="312" width="224" height="30.700"/><path d="M448 312V342.700M548 312V342.700M578 312V342.700M608 312V342.700"/>
          <rect x="1348" y="306.700" width="281" height="30.300"/><path d="M1381.700 306.700V337M1538.700 306.700V337M1568 306.700V337M1598.500 306.700V337"/>
          <path d="M448 284V299H479V284M573 285H587M580 285V298M575 292 580 299 585 292"/>
          <circle cx="431.700" cy="327.300" r="9"/><path d="M431.700 315.500V339M420 327.300H443.500"/>
          <circle cx="528" cy="328" r="12"/>
          <circle cx="1365" cy="321.700" r="9"/><path d="M1365 310.500V333M1354 321.700H1376"/>
          <circle cx="1458.800" cy="322" r="12"/><circle cx="1491" cy="322" r="12"/>
        </g>
        <g class="txt">
          <text x="996" y="299" textLength="48" lengthAdjust="spacingAndGlyphs">6.000</text>
          <text x="899" y="355.500" textLength="48" lengthAdjust="spacingAndGlyphs">3.000</text>
          <text x="667" y="642" textLength="50" lengthAdjust="spacingAndGlyphs">2.000</text>
          <text x="1340" y="524" textLength="50" lengthAdjust="spacingAndGlyphs">1.400</text>
          <text x="1412" y="564.500" textLength="50" lengthAdjust="spacingAndGlyphs">2.800</text>
          <text x="874" y="826" textLength="50" lengthAdjust="spacingAndGlyphs">3.600</text>
          <text x="997" y="885" textLength="40" lengthAdjust="spacingAndGlyphs">7.20</text>
          <text x="610" y="578" textLength="39" lengthAdjust="spacingAndGlyphs">4.00</text>
          <text x="505" y="266.500" textLength="49" lengthAdjust="spacingAndGlyphs">2.000</text>
          <text x="555" y="255.500" textLength="50" lengthAdjust="spacingAndGlyphs">+.006</text>
          <text x="557" y="275" textLength="48" lengthAdjust="spacingAndGlyphs">-.000</text>
          <text x="515" y="299" textLength="49" lengthAdjust="spacingAndGlyphs">2.500</text>
          <text x="597" y="299" textLength="38" lengthAdjust="spacingAndGlyphs">.250</text>
          <text x="474" y="335.700" textLength="38" lengthAdjust="spacingAndGlyphs">.008</text>
          <text x="563" y="335.500" text-anchor="middle">A</text><text x="593" y="335.500" text-anchor="middle">B</text><text x="623" y="335.500" text-anchor="middle">C</text>
          <text x="525" y="419" text-anchor="middle">D</text><text x="1003" y="785" text-anchor="middle">B</text>
          <text x="1349" y="289" textLength="23" lengthAdjust="spacingAndGlyphs">4X</text>
          <text x="1406" y="289" textLength="38" lengthAdjust="spacingAndGlyphs">.502</text>
          <text x="1444" y="277" textLength="50" lengthAdjust="spacingAndGlyphs">+.002</text>
          <text x="1446" y="296.700" textLength="48" lengthAdjust="spacingAndGlyphs">-.000</text>
          <text x="1406" y="330" textLength="38" lengthAdjust="spacingAndGlyphs">.002</text>
          <text x="1508" y="330" textLength="26" lengthAdjust="spacingAndGlyphs">.60</text>
          <text x="1554" y="330" text-anchor="middle">A</text><text x="1583" y="330" text-anchor="middle">D</text><text x="1613.600" y="330" text-anchor="middle">B</text>
          <g style="font-size:15px"><text x="528" y="334" text-anchor="middle">M</text><text x="1458.800" y="328" text-anchor="middle">M</text><text x="1491" y="328" text-anchor="middle">P</text></g>
        </g>
        <g class="sm">
          <text x="488" y="266" text-anchor="middle">&#8960;</text><text x="498" y="299" text-anchor="middle">&#8960;</text>
          <text x="1389" y="289" text-anchor="middle">&#8960;</text>
          <g style="font-size:23px"><text x="459" y="333.500" text-anchor="middle">&#8960;</text><text x="1392.700" y="328" text-anchor="middle">&#8960;</text></g>
        </g>
        <path d="M283 887h26" stroke="#d01212" stroke-width="3"/><path d="m308 882 12 5-12 5z" fill="#d01212"/>
        <path d="M283 887v27" stroke="#0d2fb0" stroke-width="3"/><path d="m278 913 5 11 5-11z" fill="#0d2fb0"/>
        <circle cx="283.500" cy="887" r="4" fill="#16b516"/>
        <g font-family="Liberation Sans,sans-serif" font-size="10"><text x="325" y="888" fill="#8a1010">X</text><text x="280" y="935" fill="#1230b0">Z</text><text x="284" y="883" fill="#16b516" font-size="7">Y</text></g>
        <text x="245" y="950" font-family="Liberation Sans,sans-serif" font-size="14" fill="#1e2e20">*Top</text>
      </svg>

      <ul class="nav cmd">
        <li><a class="nav-link" href="#">Features</a></li><li><a class="nav-link" href="#">Sketch</a></li><li><a class="nav-link" href="#">Sketch Ink</a></li><li><a class="nav-link" href="#">Surfaces</a></li><li><a class="nav-link" href="#">Sheet Metal</a></li><li><a class="nav-link" href="#">Weldments</a></li><li><a class="nav-link" href="#">Markup</a></li><li><a class="nav-link" href="#">Evaluate</a></li><li><a class="nav-link active" href="#">MBD Dimensions</a></li><li><a class="nav-link" href="#">SOLIDWORKS Add-Ins</a></li>
      </ul>

      <div class="under d-flex flex-grow-1">
        <aside class="fm d-flex flex-column">
          <div class="fm-top d-flex align-items-center justify-content-center"><i class="dot"></i></div>
          <div class="fm-tabs">
            <span><svg class="ic"><use href="#part"/></svg></span><span><svg class="ic"><use href="#list"/></svg></span><span><svg class="ic"><use href="#conf"/></svg></span><span class="on"><svg class="ic"><use href="#cross"/></svg></span><span><svg class="ic"><use href="#ball"/></svg></span>
          </div>
          <div class="fm-icons">
            <span class="c"><svg class="ic"><use href="#auto"/></svg></span><span class="c"><svg class="ic dis"><use href="#dim1"/></svg></span><span class="c"><svg class="ic"><use href="#basic"/></svg></span><span class="c"><svg class="ic"><use href="#capt"/></svg></span><span class="c"><svg class="ic"><use href="#gchk"/></svg></span><span class="c"><svg class="ic"><use href="#seye"/></svg></span><span class="c"><svg class="ic dis"><use href="#tgt"/></svg></span><span class="c"><svg class="ic dis"><use href="#tgt"/></svg></span><span class="c"><svg class="ic dis"><use href="#brk"/></svg></span>
          </div>
          <div class="fm-rule"></div>
          <ul class="list-group list-group-flush tree">
            <li class="list-group-item root"><svg class="ic"><use href="#part"/></svg>205ET0991-ASSN_9b--P&lt;Scheme</li>
            <li class="list-group-item"><i class="arrow r"></i><svg class="ic"><use href="#afold"/></svg>Annotations</li>
            <li class="list-group-item"><i class="arrow r"></i><svg class="ic"><use href="#plane"/></svg>Plane1</li>
            <li class="list-group-item off"><i class="arrow r"></i><svg class="ic"><use href="#plane"/></svg>Plane2(-)</li>
            <li class="list-group-item"><i class="arrow r"></i><svg class="ic"><use href="#plane"/></svg>Plane3</li>
            <li class="list-group-item"><i class="arrow r"></i><svg class="ic"><use href="#plane"/></svg>Plane4</li>
            <li class="list-group-item"><i class="arrow"></i><svg class="ic"><use href="#plane"/></svg>Plane6</li>
            <li class="list-group-item"><i class="arrow r"></i><svg class="ic"><use href="#plane"/></svg>Plane7</li>
            <li class="list-group-item"><i class="arrow r"></i><svg class="ic"><use href="#cbore"/></svg>CounterBore1</li>
            <li class="list-group-item"><i class="arrow r"></i><svg class="ic"><use href="#hole"/></svg>Simple Hole1</li>
            <li class="list-group-item off"><i class="arrow r"></i><svg class="ic"><use href="#hole"/></svg>Simple Hole2(-)</li>
            <li class="list-group-item off"><i class="arrow"></i><svg class="ic"><use href="#hole"/></svg>Simple Hole3(-)</li>
          </ul>
          <div class="hs d-flex align-items-center mt-auto"><svg><use href="#arrowl"/></svg><b></b><svg class="ms-0"><use href="#arrowr"/></svg></div>
          <div class="notch"><i class="dot"></i></div>
        </aside>
      </div>

      <div class="tasks">
        <span class="on"><svg class="ic"><use href="#home"/></svg></span><span><svg class="ic"><use href="#books"/></svg></span><span><svg class="ic"><use href="#folder"/></svg></span><span><svg class="ic"><use href="#yel"/></svg></span><span><svg class="ic"><use href="#ball"/></svg></span><span><svg class="ic"><use href="#list"/></svg></span><span><svg class="ic"><use href="#chat"/></svg></span>
      </div>
    </section>

    <aside class="pane">
      <div class="gr"><i></i></div>
      <span class="c"><svg class="ic"><use href="#ball2"/></svg></span>
      <span class="c"><svg class="ic"><use href="#bloom1"/></svg></span>
      <span class="c"><svg class="ic"><use href="#clip"/></svg></span>
      <span class="c"><svg class="ic"><use href="#scene"/></svg></span>
      <span class="c"><svg class="ic"><use href="#dbp"/></svg></span>
      <span class="c"><svg class="ic dis"><use href="#tgt"/></svg></span>
      <span class="c"><svg class="ic"><use href="#cam"/></svg></span>
      <span class="c"><svg class="ic"><use href="#sphcam"/></svg></span>
      <span class="c"><svg class="ic"><use href="#sph"/></svg></span>
      <span class="c"><svg class="ic"><use href="#film"/></svg></span>
      <span class="c"><svg class="ic"><use href="#four"/></svg></span>
      <span class="c"><svg class="ic"><use href="#sphg"/></svg></span>
      <span class="c"><svg class="ic"><use href="#sphcam"/></svg></span>
      <span class="c"><svg class="ic"><use href="#bloom1"/></svg></span>
      <hr>
    </aside>
  </main>

  <div class="row3 d-flex">
    <i class="nav-g"></i>
    <div class="navb"><span><svg><use href="#first"/></svg></span><span><svg><use href="#prev"/></svg></span><span><svg><use href="#next"/></svg></span><span><svg><use href="#last"/></svg></span></div>
    <span class="model">Model</span>
    <span class="motion">Motion Study 1</span>
    <i class="rl"></i>
  </div>
  <div class="row4 d-flex">
    <div class="mot">
      <span class="c"><i class="grip"></i></span>
      <span class="c"><svg class="ic dis"><use href="#m1"/></svg></span>
      <span class="c"><svg class="ic dis"><use href="#m2"/></svg></span>
      <span class="c"><svg class="ic dis"><use href="#m3"/></svg></span>
      <span class="c"><svg class="ic dis"><use href="#m4"/></svg></span>
      <span class="c"><svg class="ic dis"><use href="#m5"/></svg></span>
      <span class="c"><svg class="ic dis"><use href="#m6"/></svg></span>
      <span class="c"><svg class="ic"><use href="#m7"/></svg></span>
      <span class="c"><i class="vs full"></i></span>
    </div>
  </div>
  <footer class="stat d-flex">
    <span>SOLIDWORKS Student Edition - Academic Use Only</span>
    <span class="ms-auto e">Editing Part</span><span class="i">IPS</span><span class="u car"></span><svg class="ic"><use href="#disc"/></svg>
  </footer>
</div>
</body>
</html>
